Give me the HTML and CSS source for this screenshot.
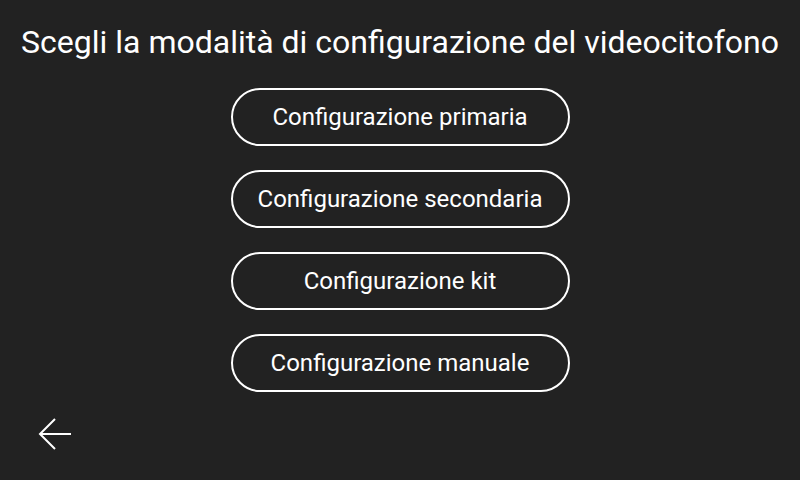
FILE: index.html
```html
<!DOCTYPE html>
<html lang="it">

<head>
    <meta charset="UTF-8">
    <meta name="viewport" content="width=device-width, initial-scale=1.0">
    <title>Configurazione</title>
    <link rel="stylesheet" href="styles.css">
</head>

<body>
    <div class="screen">
        <h1 class="title">Scegli la modalità di configurazione del videocitofono</h1>
        <div class="options">
            <button class="option">Configurazione primaria</button>
            <button class="option">Configurazione secondaria</button>
            <button class="option">Configurazione kit</button>
            <button class="option">Configurazione manuale</button>
        </div>
        <div class="footer">
            <button class="back" aria-label="Indietro">
                <svg width="34" height="34" viewBox="0 0 34 34">
                    <path d="M2 17 H33 M17 2 L2 17 L17 32" fill="none" stroke="#fff" stroke-width="2" />
                </svg>
            </button>
        </div>
    </div>
</body>

</html>
```

FILE: styles.css
```css
body {
    font-family: Roboto, "Noto Sans", sans-serif;
    margin: 0;
    padding: 0;
    background-color: #222222;
    color: white;
}

.screen {
    width: 800px;
    height: 480px;
    display: flex;
    flex-direction: column;
    align-items: center;
}

.title {
    font-size: 32px;
    font-weight: 400;
    margin: 24px 0 0 0;
    line-height: 36px;
    white-space: nowrap;
}

.options {
    display: flex;
    flex-direction: column;
    gap: 24px;
    margin-top: 28px;
}

.option {
    width: 339px;
    height: 58px;
    background-color: transparent;
    border: 2px solid white;
    border-radius: 29px;
    color: white;
    font-family: Roboto, "Noto Sans", sans-serif;
    font-size: 24px;
    cursor: pointer;
}

.footer {
    align-self: stretch;
    padding: 25px 0 0 38px;
}

.back {
    background: none;
    border: none;
    padding: 0;
    display: block;
    cursor: pointer;
}
```
